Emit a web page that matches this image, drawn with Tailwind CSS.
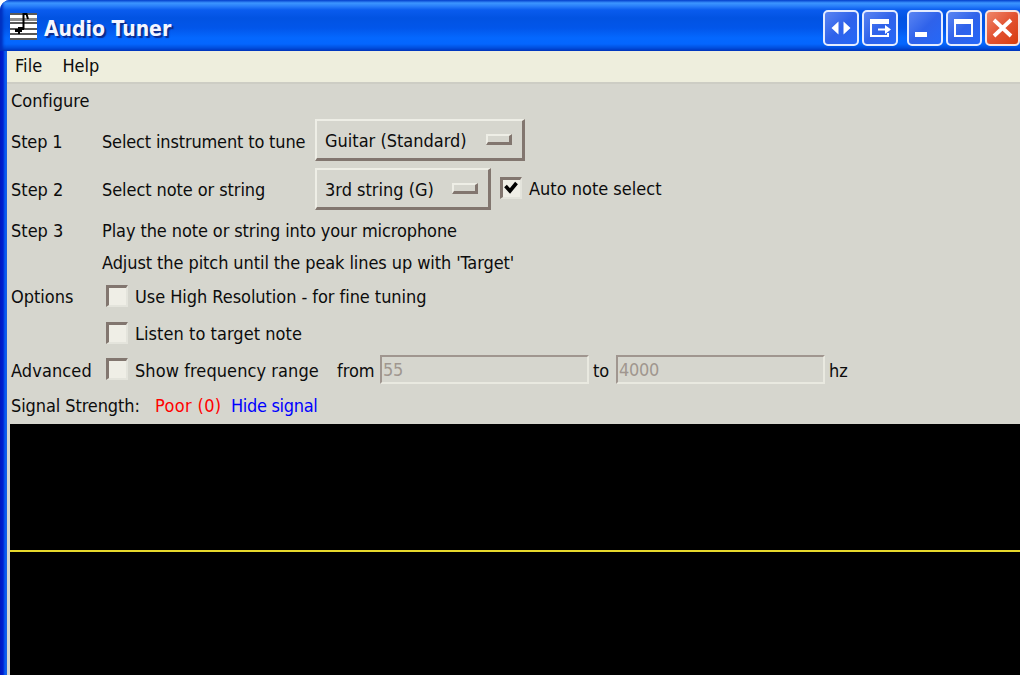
<!DOCTYPE html>
<html lang="en">
<head>
  <meta charset="UTF-8" />
  <meta name="viewport" content="width=device-width, initial-scale=1.0" />
  <title>Audio Tuner</title>
  <script src="https://cdn.jsdelivr.net/npm/@tailwindcss/browser@4"></script>
</head>
<body class="w-[1020px] h-[675px] overflow-hidden bg-white font-['DejaVu_Sans_Condensed','DejaVu_Sans',sans-serif] [font-stretch:condensed] [font-variant-ligatures:none] text-[18px] leading-[24px] text-[#0c0c0c] whitespace-nowrap">
  <div class="flex flex-col h-full rounded-tl-[10px] overflow-hidden bg-[#0a50e0]">

    <!-- Title bar -->
    <header class="flex items-center h-[51px] shrink-0 pl-[10px] pt-[4px] shadow-[inset_3px_0_3px_#0030c0] bg-[linear-gradient(to_bottom,#0a50d8_0px,#3c96ff_3px,#2a80fa_6px,#0a5cee_10px,#0253e2_18px,#0256ea_28px,#0468ff_38px,#0466fe_44px,#0048d4_49px,#0038b8_51px)]">
      <svg class="w-[27px] h-[27px] mb-[3px] shrink-0" viewBox="0 0 27 27">
        <rect width="27" height="27" fill="#fff" />
        <path d="M0 1h27M0 10h27M0 16h27M0 21h27M0 26h27" stroke="#222" stroke-width="1.500" />
        <path d="M0 6.500h27" stroke="#8c8c8c" stroke-width="3" />
        <path d="M13.500 0v16M13.500 1h3l1.500 5" fill="none" stroke="#000" stroke-width="2" />
        <path d="M5 16h3v-2h6v3h-2v2h-2v2H8v-2H5z" fill="#000" />
      </svg>
      <h1 class="ml-[7px] pt-[3px] text-[21px] font-bold text-[#f4f6ff] [text-shadow:2px_2px_1px_#0a2a8c]">Audio Tuner</h1>
      <div class="flex ml-auto">
        <button class="w-[36px] h-[36px] rounded-[5px] border-2 border-[#e4ecff] bg-linear-to-br from-[#5a84f2] via-[#2f62ea] to-[#2468f8]">
          <svg class="w-[32px] h-[32px]" viewBox="0 0 32 32"><path d="M13.500 9.500v13L6.500 16zM18.500 9.500v13l7-6.500z" fill="#fff" /></svg>
        </button>
        <button class="ml-[3px] w-[36px] h-[36px] rounded-[5px] border-2 border-[#e4ecff] bg-linear-to-br from-[#5a84f2] via-[#2f62ea] to-[#2468f8]">
          <svg class="w-[32px] h-[32px]" viewBox="0 0 32 32" fill="none" stroke="#fff" stroke-width="2"><path d="M24 12V8H7v16h17v-3" /><path d="M6 9.500h19" stroke-width="5" /><path d="M14 17.500h9" /><path d="M21 13l6 4.500L21 22z" fill="#fff" stroke="none" /></svg>
        </button>
        <button class="ml-[9px] w-[36px] h-[36px] rounded-[5px] border-2 border-[#e4ecff] bg-linear-to-br from-[#5a84f2] via-[#2f62ea] to-[#2468f8]">
          <svg class="w-[32px] h-[32px]" viewBox="0 0 32 32"><path d="M6 20h12v5H6z" fill="#fff" /></svg>
        </button>
        <button class="ml-[3px] w-[36px] h-[36px] rounded-[5px] border-2 border-[#e4ecff] bg-linear-to-br from-[#5a84f2] via-[#2f62ea] to-[#2468f8]">
          <svg class="w-[32px] h-[32px]" viewBox="0 0 32 32" fill="none" stroke="#fff"><path d="M7 8h17v16H7z" stroke-width="2" /><path d="M6 9.500h19" stroke-width="5" /></svg>
        </button>
        <button class="ml-[3px] w-[35px] h-[36px] rounded-[5px] border-2 border-[#f8e4e0] bg-linear-to-br from-[#ee8468] via-[#e25230] to-[#d83c08]">
          <svg class="w-[31px] h-[32px]" viewBox="0 0 31 32"><path d="M7 8l17 16M24 8L7 24" stroke="#fff" stroke-width="3.800" /></svg>
        </button>
      </div>
    </header>

    <div class="flex flex-1 pl-[7px] bg-[linear-gradient(to_right,#0018c0_0px,#0020d0_3px,#0a5cf0_5px,#0a5cf0_6px,#2060d8_7px)]">
      <div class="flex flex-col flex-1 bg-[#d6d6ce]">
        <!-- Menu bar -->
        <nav class="flex items-center h-[33px] shrink-0 pl-[8px] pb-[1px] gap-[20px] bg-[#eeeedd] border-b-2 border-[#cdcdc4]">
          <span class="tracking-[0.1px]">File</span>
          <span>Help</span>
        </nav>

        <!-- Settings -->
        <main class="flex flex-col pl-[4px]">
          <div class="flex items-center h-[35px] pb-[1px]"><span>Configure</span></div>
          <div class="flex items-center h-[44px]">
            <span class="w-[91px] pt-[1px] tracking-[-0.15px]">Step 1</span>
            <span class="w-[213px] pt-[1px] tracking-[-0.16px]">Select instrument to tune</span>
            <button class="flex items-center justify-between w-[210px] h-[42px] mb-[2px] pl-[8px] pr-[10px] border-2 border-t-[#eeeee6] border-l-[#eeeee6] border-r-[3px] border-b-[3px] border-r-[#82766f] border-b-[#82766f]">
              <span class="pt-[3px]">Guitar (Standard)</span>
              <i class="w-[26px] h-[11px] mb-[1px] border-2 border-t-[#eeeee6] border-l-[#eeeee6] border-r-[3px] border-b-[3px] border-r-[#82766f] border-b-[#82766f]"></i>
            </button>
          </div>
          <div class="flex items-center h-[52px]">
            <span class="w-[91px] pt-[2px]">Step 2</span>
            <span class="w-[213px] pt-[2px] tracking-[-0.08px]">Select note or string</span>
            <button class="flex items-center justify-between w-[176px] h-[42px] pl-[8px] pr-[10px] border-2 border-t-[#eeeee6] border-l-[#eeeee6] border-r-[3px] border-b-[3px] border-r-[#82766f] border-b-[#82766f]">
              <span class="pt-[3px]">3rd string (G)</span>
              <i class="w-[26px] h-[11px] mb-[1px] border-2 border-t-[#eeeee6] border-l-[#eeeee6] border-r-[3px] border-b-[3px] border-r-[#82766f] border-b-[#82766f]"></i>
            </button>
            <span class="w-[22px] h-[22px] ml-[9px] mb-[2px] bg-[#efeee6] border-2 border-t-[3px] border-l-[3px] border-t-[#82766f] border-l-[#82766f] border-r-[#e4e4dc] border-b-[#e4e4dc]">
              <svg class="w-[16px] h-[16px]" viewBox="0 0 16 16"><path d="M2.500 6l4.500 5 6.500-8" fill="none" stroke="#000" stroke-width="3.600" /></svg>
            </span>
            <span class="ml-[7px]">Auto note select</span>
          </div>
          <div class="flex items-center h-[32px]">
            <span class="w-[91px]">Step 3</span>
            <span class="tracking-[-0.1px]">Play the note or string into your microphone</span>
          </div>
          <div class="flex items-center h-[32px] pl-[91px]">
            <span class="tracking-[-0.09px]">Adjust the pitch until the peak lines up with 'Target'</span>
          </div>
          <div class="flex items-center h-[36px]">
            <span class="w-[95px]">Options</span>
            <span class="w-[22px] h-[22px] mb-[3px] bg-[#efeee6] border-2 border-t-[3px] border-l-[3px] border-t-[#82766f] border-l-[#82766f] border-r-[#e4e4dc] border-b-[#e4e4dc]"></span>
            <span class="ml-[7px] tracking-[-0.05px]">Use High Resolution - for fine tuning</span>
          </div>
          <div class="flex items-center h-[36px] pl-[95px]">
            <span class="w-[22px] h-[22px] mb-[1px] bg-[#efeee6] border-2 border-t-[3px] border-l-[3px] border-t-[#82766f] border-l-[#82766f] border-r-[#e4e4dc] border-b-[#e4e4dc]"></span>
            <span class="ml-[7px] pt-[1px] tracking-[0.05px]">Listen to target note</span>
          </div>
          <div class="flex items-center h-[38px]">
            <span class="w-[95px] pt-[1px] tracking-[0.1px]">Advanced</span>
            <span class="w-[22px] h-[22px] mb-[2px] bg-[#efeee6] border-2 border-t-[3px] border-l-[3px] border-t-[#82766f] border-l-[#82766f] border-r-[#e4e4dc] border-b-[#e4e4dc]"></span>
            <span class="ml-[7px] w-[202px] pt-[1px] tracking-[0.08px]">Show frequency range</span>
            <span class="w-[43px] pt-[1px]">from</span>
            <span class="w-[209px] h-[29px] mb-[1px] pt-[1px] pl-[1px] border-2 border-t-[#a0968f] border-l-[#a0968f] border-r-[#e9e9e0] border-b-[#e9e9e0] text-[#a0968f] tracking-[-0.3px]">55</span>
            <span class="w-[27px] pt-[1px] pl-[4px]">to</span>
            <span class="w-[209px] h-[29px] mb-[1px] pt-[1px] pl-[1px] border-2 border-t-[#a0968f] border-l-[#a0968f] border-r-[#e9e9e0] border-b-[#e9e9e0] text-[#a0968f] tracking-[-0.3px]">4000</span>
            <span class="ml-[4px] pt-[1px]">hz</span>
          </div>
          <div class="flex items-center h-[35px] pb-[1px]">
            <span class="w-[144px] tracking-[-0.1px]">Signal Strength:</span>
            <span class="w-[76px] text-[#ff0000] tracking-[0.35px]">Poor (0)</span>
            <span class="text-[#0000ff] tracking-[-0.32px]">Hide signal</span>
          </div>
        </main>

        <!-- Signal trace -->
        <section class="flex-1 ml-[3px] pt-[126px] bg-black">
          <div class="h-[2px] bg-[#e6d82c]"></div>
        </section>
      </div>
    </div>
  </div>
</body>
</html>
